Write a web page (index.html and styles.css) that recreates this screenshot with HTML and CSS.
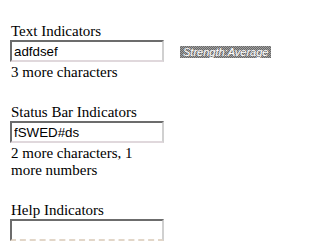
FILE: index.html
```html
<!DOCTYPE html>
<html>
<head>
<meta charset="utf-8">
<link rel="stylesheet" href="styles.css">
</head>
<body>
<div class="page">
  <div class="section">
    <div class="label">Text Indicators</div>
    <div class="row">
      <input class="field" type="text" value="adfdsef">
      <span class="strength">Strength:Average</span>
    </div>
    <div class="msg">3 more characters</div>
  </div>
  <div class="section">
    <div class="label">Status Bar Indicators</div>
    <div class="row">
      <input class="field" type="text" value="fSWED#ds">
    </div>
    <div class="msg">2 more characters, 1 more numbers</div>
  </div>
  <div class="section">
    <div class="label">Help Indicators</div>
    <div class="row">
      <input class="field help" type="text" value="">
    </div>
  </div>
</div>
</body>
</html>
```
FILE: styles.css
```css
html, body {
  margin: 0;
  padding: 0;
  background: #fff;
}
body {
  font-family: "Liberation Serif", "Times New Roman", serif;
  font-size: 15px;
  color: #000;
}
.page {
  padding: 22px 0 0 10px;
}
.section {
  margin-bottom: 22px;
}
.label {
  line-height: 18px;
  padding-left: 1px;
}
.row {
  display: flex;
  align-items: center;
  gap: 16px;
  height: 22px;
}
.field {
  box-sizing: border-box;
  width: 154px;
  height: 22px;
  margin: 0;
  padding: 1px 2px;
  font-family: "Liberation Sans", Arial, sans-serif;
  font-size: 13.33px;
  color: #000;
  border-style: solid;
  border-width: 2px;
  border-top-color: #6c6c6c;
  border-left-color: #6c6c6c;
  border-right-color: #d0d0d0;
  border-bottom-color: #e0d8dc;
  background: #fff;
  outline: none;
}
.help {
  border-bottom-style: dashed;
  border-bottom-color: #e2d6c8;
}
.strength {
  display: inline-block;
  padding: 0 3px;
  height: 12px;
  line-height: 12px;
  margin-top: 1px;
  font-family: "Liberation Sans", Arial, sans-serif;
  font-style: italic;
  font-size: 11px;
  color: #fff;
  background-color: #808080;
  background-image: conic-gradient(#686868 25%, #a0a0a0 25% 50%, #686868 50% 75%, #a0a0a0 75%);
  background-size: 2px 2px;
}
.msg {
  width: 156px;
  line-height: 17px;
  padding-left: 1px;
  padding-top: 2px;
}
```
